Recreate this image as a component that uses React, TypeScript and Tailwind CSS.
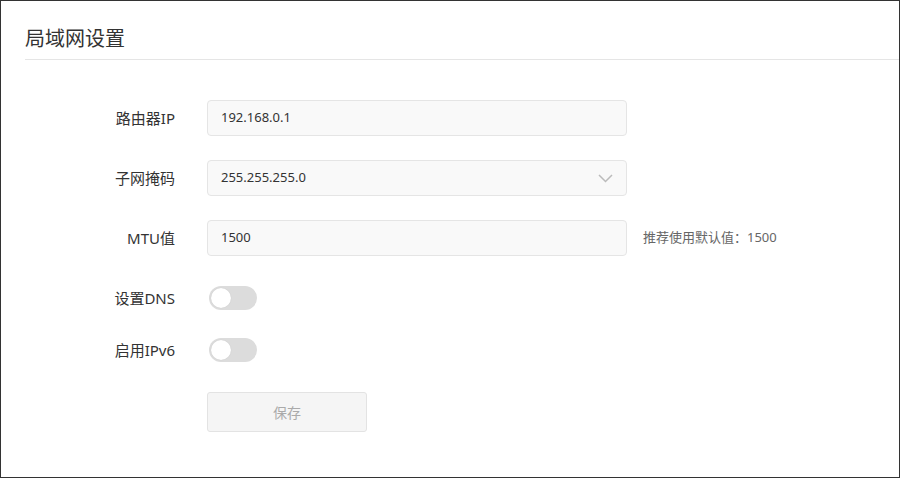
import React from 'react';

const fontStack = { fontFamily: '"Noto Sans", "Noto Sans CJK SC", sans-serif' };

const Label: React.FC<{ children: React.ReactNode }> = ({ children }) => (
  <div className="w-[150px] shrink-0 text-right text-[15px] text-[#333]">{children}</div>
);

const Toggle: React.FC = () => (
  <div className="relative ml-[2px] h-[24px] w-[48px] rounded-full bg-[#dcdcdc]">
    <span className="absolute left-[2px] top-[2px] h-[20px] w-[20px] rounded-full bg-white shadow-[0_0_1px_rgba(0,0,0,0.15)]" />
  </div>
);

export default function App() {
  return (
    <div className="h-[478px] w-[900px] border border-[#333] bg-white" style={fontStack}>
      <div className="ml-[24px] border-b border-[#e5e5e5] pb-[8px] pt-[25px]">
        <h1 className="text-[20px] leading-[25px] text-[#333]">局域网设置</h1>
      </div>

      <div className="pl-[24px] pt-[40px]">
        <div className="flex h-[36px] items-center gap-[32px]">
          <Label>路由器IP</Label>
          <div className="flex h-[36px] w-[420px] items-center rounded-[4px] border border-[#e5e5e5] bg-[#f9f9f9] px-[13px] text-[13px] text-[#333]">
            192.168.0.1
          </div>
        </div>

        <div className="mt-[24px] flex h-[36px] items-center gap-[32px]">
          <Label>子网掩码</Label>
          <div className="flex h-[36px] w-[420px] items-center justify-between rounded-[4px] border border-[#e5e5e5] bg-[#f9f9f9] pl-[13px] pr-[13px] text-[13px] text-[#333]">
            <span>255.255.255.0</span>
            <svg width="15" height="9" viewBox="0 0 15 9" fill="none">
              <path d="M1 1l6.5 6.5L14 1" stroke="#bbb" strokeWidth="1.5" />
            </svg>
          </div>
        </div>

        <div className="mt-[24px] flex h-[36px] items-center gap-[32px]">
          <Label>MTU值</Label>
          <div className="flex h-[36px] w-[420px] items-center rounded-[4px] border border-[#e5e5e5] bg-[#f9f9f9] px-[13px] text-[13px] text-[#333]">
            1500
          </div>
          <span className="-ml-[16px] text-[13px] text-[#666]">推荐使用默认值：1500</span>
        </div>

        <div className="mt-[30px] flex h-[24px] items-center gap-[32px]">
          <Label>设置DNS</Label>
          <Toggle />
        </div>

        <div className="mt-[28px] flex h-[24px] items-center gap-[32px]">
          <Label>启用IPv6</Label>
          <Toggle />
        </div>

        <div className="mt-[30px] flex gap-[32px]">
          <div className="w-[150px] shrink-0" />
          <button className="h-[40px] w-[160px] rounded-[3px] border border-[#e3e3e3] bg-[#f5f5f5] text-[14px] text-[#aaa]">
            保存
          </button>
        </div>
      </div>
    </div>
  );
}
